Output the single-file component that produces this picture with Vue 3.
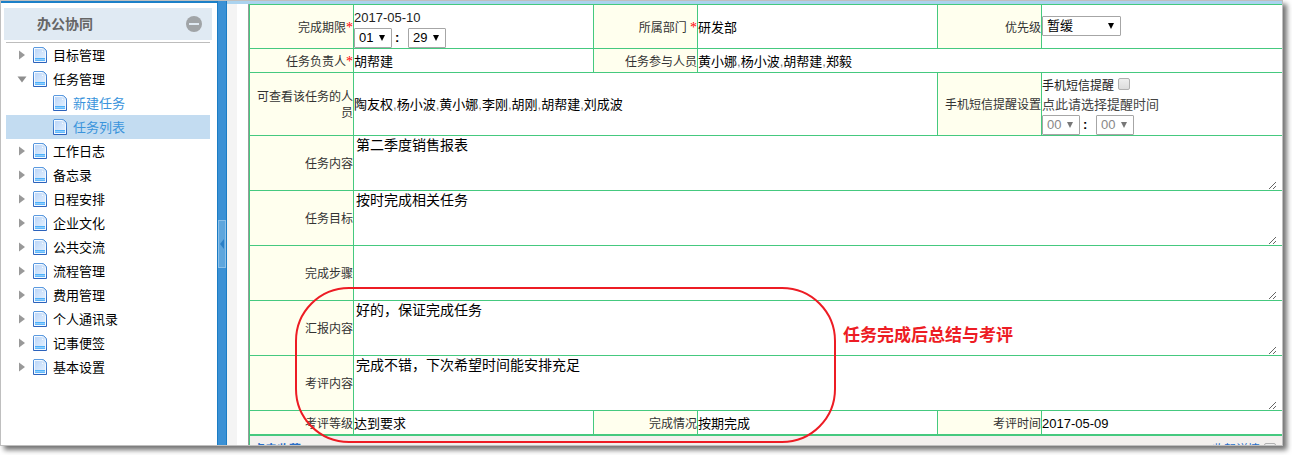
<script setup>
import { ref } from 'vue'

const menu = ref([
  { name: '目标管理' },
  {
    name: '任务管理',
    open: true,
    children: [{ name: '新建任务' }, { name: '任务列表', active: true }],
  },
  { name: '工作日志' },
  { name: '备忘录' },
  { name: '日程安排' },
  { name: '企业文化' },
  { name: '公共交流' },
  { name: '流程管理' },
  { name: '费用管理' },
  { name: '个人通讯录' },
  { name: '记事便签' },
  { name: '基本设置' },
])

const participants = ['黄小娜', '杨小波', '胡帮建', '郑毅']
const viewers = ['陶友权', '杨小波', '黄小娜', '李刚', '胡刚', '胡帮建', '刘成波']

const notes = ref([
  { id: 'content', label: '任务内容', text: '第二季度销售报表' },
  { id: 'goal', label: '任务目标', text: '按时完成相关任务' },
  { id: 'steps', label: '完成步骤', text: '' },
  { id: 'report', label: '汇报内容', text: '好的，保证完成任务' },
  { id: 'review', label: '考评内容', text: '完成不错，下次希望时间能安排充足' },
])
</script>

<template>
  <div class="page">
    <svg width="0" height="0" class="defs" aria-hidden="true">
      <defs>
        <linearGradient id="paper" x1="0" y1="0" x2="1" y2="1">
          <stop offset="0" stop-color="#bcd6f8" />
          <stop offset="1" stop-color="#e6f2ff" />
        </linearGradient>
        <linearGradient id="edge" x1="0" y1="0" x2="0" y2="1">
          <stop offset="0" stop-color="#5c9be0" />
          <stop offset="1" stop-color="#2c62bb" />
        </linearGradient>
      </defs>
      <symbol id="doc" viewBox="0 0 14 16">
        <path d="M1 0.500H10.500L13.500 3.500V15.500H0.500V1Z" fill="#f4f9ff" stroke="url(#edge)" />
        <path d="M2 2H9V5H12V14H2Z" fill="url(#paper)" />
        <path d="M10 1V4H13Z" fill="#f8fbff" stroke="#8ab4e6" stroke-width="0.500" />
        <rect x="2" y="11" width="10" height="3" fill="#8fd0ff" />
        <rect x="2" y="11" width="10" height="1" fill="#4fb0fa" />
        <rect x="2" y="13" width="10" height="1" fill="#62b8fb" />
      </symbol>
    </svg>

    <div class="window">
      <aside class="sidebar">
        <header class="side-head">
          <h1>办公协同</h1>
          <button type="button" class="collapse" aria-label="收起">
            <svg width="16" height="16" viewBox="0 0 16 16">
              <circle cx="8" cy="8" r="8" fill="#a0a4a7" />
              <rect x="3" y="7" width="10" height="2" fill="#e0eaf3" />
            </svg>
          </button>
        </header>
        <nav class="tree">
          <template v-for="item in menu" :key="item.name">
            <a href="#" class="node">
              <svg class="arrow" width="10" height="10" viewBox="0 0 10 10">
                <path v-if="item.open" d="M0.500 2.500H9.500L5 8.500Z" fill="#8e8e8e" />
                <path v-else d="M2 0.500L8 5L2 9.500Z" fill="#999" />
              </svg>
              <svg class="doc" width="14" height="16"><use href="#doc" /></svg>
              <span>{{ item.name }}</span>
            </a>
            <a
              v-for="child in item.children"
              :key="child.name"
              href="#"
              class="node child"
              :class="{ active: child.active }"
            >
              <svg class="doc" width="14" height="16"><use href="#doc" /></svg>
              <span>{{ child.name }}</span>
            </a>
          </template>
        </nav>
      </aside>

      <div class="splitter">
        <button type="button" class="handle" aria-label="隐藏菜单">
          <svg width="4" height="10" viewBox="0 0 4 10"><path d="M4 0V10L0 5Z" fill="#2a7fc6" /></svg>
        </button>
      </div>

      <main class="content">
        <div class="sheet">
          <table>
            <colgroup>
              <col class="c-label" /><col /><col class="c-label" /><col /><col class="c-label" /><col />
            </colgroup>
            <tbody>
              <tr class="tall">
                <th>完成期限<span class="req">*</span></th>
                <td>
                  <div class="date-line">2017-05-10</div>
                  <div class="time-line">
                    <span class="pick"><select aria-label="小时"><option>01</option></select></span>
                    <span class="colon">:</span>
                    <span class="pick"><select aria-label="分钟"><option>29</option></select></span>
                  </div>
                </td>
                <th>所属部门 <span class="req">*</span></th>
                <td>研发部</td>
                <th><label for="priority">优先级</label></th>
                <td>
                  <span class="pick wide"><select id="priority"><option>暂缓</option></select></span>
                </td>
              </tr>
              <tr class="short">
                <th>任务负责人<span class="req">*</span></th>
                <td>胡帮建</td>
                <th>任务参与人员</th>
                <td colspan="3">
                  <template v-for="(p, i) in participants" :key="p"><i v-if="i">,</i>{{ p }}</template>
                </td>
              </tr>
              <tr class="remind">
                <th>可查看该任务的人员</th>
                <td colspan="3">
                  <template v-for="(p, i) in viewers" :key="p"><i v-if="i">,</i>{{ p }}</template>
                </td>
                <th>手机短信提醒设置</th>
                <td>
                  <div class="sms-line">
                    <label for="sms">手机短信提醒</label>
                    <input id="sms" type="checkbox" />
                  </div>
                  <div class="hint">点此请选择提醒时间</div>
                  <div class="time-line">
                    <span class="pick off"><select aria-label="提醒小时" disabled><option>00</option></select></span>
                    <span class="colon">:</span>
                    <span class="pick off"><select aria-label="提醒分钟" disabled><option>00</option></select></span>
                  </div>
                </td>
              </tr>
              <tr v-for="n in notes" :key="n.id" class="note">
                <th><label :for="n.id">{{ n.label }}</label></th>
                <td colspan="5"><textarea :id="n.id" v-model="n.text"></textarea></td>
              </tr>
              <tr class="short last">
                <th>考评等级</th>
                <td>达到要求</td>
                <th>完成情况</th>
                <td>按期完成</td>
                <th>考评时间</th>
                <td>2017-05-09</td>
              </tr>
            </tbody>
          </table>
          <div class="cut">
            <strong>点击收藏</strong>
            <label class="fold">收起详情 <input type="checkbox" /></label>
          </div>
        </div>
        <div class="ring"></div>
        <p class="callout">任务完成后总结与考评</p>
      </main>
    </div>
  </div>
</template>

<style>
body {
  margin: 0;
  background: #fff;
}
</style>

<style scoped>
* {
  box-sizing: border-box;
}
.page {
  padding: 0 9px 9px 0;
}
.defs {
  position: absolute;
}
.window {
  display: flex;
  border: 1px solid #bfbfbf;
  background: #fff;
  box-shadow: 4px 4px 5px rgba(0, 0, 0, 0.55);
  font: 13px/18px "Liberation Sans", "Noto Sans CJK SC", sans-serif;
  color: #000;
}
.sidebar {
  flex: none;
  width: 216px;
  padding: 5px 5px 0 3px;
  border-top: 2px solid #1b80c8;
}
.side-head {
  display: flex;
  align-items: center;
  justify-content: space-between;
  height: 32px;
  padding: 0 10px 0 33px;
  background: #e0eaf3;
}
h1 {
  margin: 0;
  font-size: 14px;
  color: #666;
}
button {
  padding: 0;
  border: 0;
  background: none;
}
.collapse {
  display: flex;
}
.tree {
  margin: 2px 2px 0;
  border-top: 1px solid #bdbdbd;
}
.node {
  display: flex;
  align-items: center;
  height: 24px;
  padding-left: 11px;
  color: #000;
  text-decoration: none;
}
.node span {
  padding-top: 2px;
}
.arrow {
  margin-right: 6px;
}
.doc {
  margin-right: 6px;
}
.child {
  padding-left: 47px;
  color: #3a94dc;
}
.active {
  background: #c3dcf1;
}
.splitter {
  position: relative;
  flex: none;
  width: 10px;
  border: 1px solid #1b7cc4;
  border-width: 0 1px;
  background: #3b91d5;
}
.handle {
  position: absolute;
  top: 219px;
  left: 0;
  display: flex;
  align-items: center;
  justify-content: center;
  width: 8px;
  height: 48px;
  border: 1px solid #8cc0e8;
  background: #5ea6dd;
}
.content {
  position: relative;
  flex: 1;
  min-width: 0;
  padding-left: 21px;
  border-top: 3px solid #abd3ef;
  background: linear-gradient(90deg, #f4f4f4 10px, #fff 10px);
}
.sheet {
  border-left: 1px solid #999;
}
table {
  width: 100%;
  table-layout: fixed;
  border-collapse: separate;
  border-spacing: 0;
  border-top: 1px solid #45c97f;
  border-left: 1px solid #45c97f;
}
.c-label {
  width: 104px;
}
th,
td {
  padding: 2px 0 0;
  border: 0 solid #45c97f;
  border-width: 0 1px 1px 0;
  text-align: left;
  vertical-align: middle;
}
td:last-child {
  border-right: 0;
}
th {
  background: #ffffee;
  font-size: 12px;
  font-weight: 400;
  line-height: 16px;
  color: #333;
  text-align: right;
}
.tall {
  height: 44px;
}
.short {
  height: 24px;
}
.remind {
  height: 63px;
}
.note {
  height: 55px;
}
.note td {
  padding: 0;
}
.last {
  height: 25px;
}
.last th,
.last td {
  border-bottom-width: 2px;
}
.req {
  color: #f00;
  font-family: "Liberation Serif", serif;
  font-size: 14px;
}
i {
  font-style: normal;
  color: #777;
}
.date-line {
  height: 21px;
  line-height: 22px;
  color: #222;
}
.time-line {
  display: flex;
  align-items: center;
}
.colon {
  width: 16px;
  padding-left: 3px;
  font-weight: 700;
  line-height: 20px;
}
.pick {
  position: relative;
  display: block;
  width: 38px;
  height: 20px;
}
.pick::after {
  content: "";
  position: absolute;
  top: 7px;
  right: 7px;
  border: 3px solid transparent;
  border-top: 6px solid #000;
  border-bottom: 0;
  pointer-events: none;
}
.wide {
  width: 79px;
  margin-bottom: 4px;
}
.off::after {
  border-top-color: #777;
}
select {
  appearance: none;
  width: 100%;
  height: 20px;
  padding: 0 4px;
  border: 1px solid #a6a6a6;
  border-radius: 1px;
  background: #fff;
  font: inherit;
  color: #000;
}
select:disabled {
  color: #888;
  opacity: 1;
}
.sms-line {
  display: flex;
  align-items: center;
  gap: 4px;
  height: 20px;
  padding-top: 1px;
  font-size: 12px;
  color: #222;
}
input {
  appearance: none;
  width: 12px;
  height: 12px;
  margin: 0 0 4px;
  border: 1px solid #b0b0b0;
  border-radius: 2px;
  background: linear-gradient(#eee, #dcdcdc);
}
.hint {
  height: 20px;
  line-height: 20px;
  color: #444;
}
textarea {
  display: block;
  width: calc(100% - 5px);
  height: 54px;
  padding: 0 2px;
  border: 0;
  outline: 0;
  background: transparent;
  font: 14px/18px "Liberation Sans", "Noto Sans CJK SC", sans-serif;
  color: #000;
  resize: both;
}
.cut {
  display: flex;
  justify-content: space-between;
  height: 9px;
  padding: 7px 6px 0 3px;
  overflow: hidden;
  border-left: 1px solid #45c97f;
  background: #f3f0ee;
  font-size: 12px;
  line-height: 14px;
  color: #2a6fc9;
}
.fold {
  display: flex;
  gap: 4px;
}
.ring {
  position: absolute;
  top: 283px;
  left: 68px;
  width: 541px;
  height: 156px;
  border: 2px solid #ed1c24;
  border-radius: 54px;
  pointer-events: none;
}
.callout {
  position: absolute;
  top: 320px;
  left: 616px;
  margin: 0;
  font-size: 17px;
  font-weight: 700;
  line-height: 24px;
  color: #ed1c24;
}
</style>
